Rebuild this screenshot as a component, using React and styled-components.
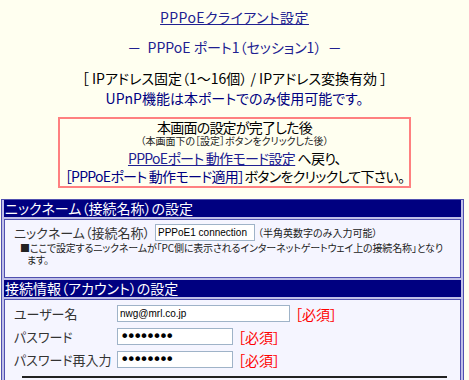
import styled, { createGlobalStyle } from "styled-components";

const GlobalStyle = createGlobalStyle`
  body {
    margin: 0;
    background: #fffff0;
    font-family: "Noto Sans CJK JP", "Noto Sans", sans-serif;
    font-feature-settings: "palt";
    color: #000;
  }
`;

const Page = styled.div`
  display: flex;
  flex-direction: column;
  align-items: center;
  padding-top: 8px;
`;

const Title = styled.a`
  font-size: 14px;
  line-height: 18px;
  color: #202090;
  text-decoration: underline;
  letter-spacing: 0.4px;
`;

const Line = styled.div`
  font-size: 14px;
  line-height: 18px;
  margin-top: ${(p) => p.$gap || 0}px;
  color: ${(p) => p.$color || "#000"};
  white-space: nowrap;
`;

const Notice = styled.div`
  margin-top: 10px;
  width: 353px;
  box-sizing: border-box;
  border: 2px solid #ff8080;
  padding: 0 0 1px;
  text-align: center;
`;

const NoticeHead = styled.div`
  font-size: 14px;
  line-height: 16px;
  letter-spacing: -0.8px;
`;

const Small = styled.div`
  font-size: 10px;
  line-height: 12px;
  color: #222;
`;

const NoticeLine = styled.div`
  font-size: 14px;
  line-height: 18px;
  margin-top: ${(p) => p.$gap || 0}px;
  letter-spacing: -0.7px;
  white-space: nowrap;
`;

const Link = styled.a`
  color: #202090;
  text-decoration: underline;
`;

const Navy = styled.span`
  color: #000080;
`;

const Panel = styled.div`
  align-self: flex-start;
  margin: 11px 0 0 1px;
  width: 463px;
  box-sizing: border-box;
  border: 1px solid #5050b0;
  background: #c0c0e8;
  padding: 0 2px 2px;
  display: flex;
  flex-direction: column;
  gap: 2px;
`;

const Heading = styled.div`
  background: #000080;
  color: #fff;
  font-size: 14px;
  line-height: 17px;
  padding-left: 1px;
`;

const Cell = styled.div`
  background: #f5f5ff;
  border: 1px solid #5050b0;
  padding: ${(p) => p.$pad};
  display: flex;
  flex-direction: column;
  gap: ${(p) => p.$gap || 0}px;
`;

const Row = styled.div`
  display: flex;
  align-items: center;
  height: 17px;
`;

const Label = styled.span`
  width: ${(p) => p.$w}px;
  flex: none;
  font-size: 13px;
  color: #333;
  white-space: nowrap;
`;

const Field = styled.input`
  box-sizing: border-box;
  width: ${(p) => p.$w}px;
  height: 17px;
  margin: 0;
  padding: 0 2px;
  border: 1px solid #9fb3c8;
  background: #fff;
  font-family: "Liberation Sans", sans-serif;
  font-size: 10px;
  color: #000;
  outline: none;

  &[type="password"] {
    font-family: "DejaVu Sans", sans-serif;
    font-size: 16px;
    letter-spacing: -3px;
    line-height: 15px;
  }
`;

const Hint = styled.span`
  margin-left: 3px;
  font-size: 10px;
  color: #222;
`;

const Required = styled.span`
  margin-left: 5px;
  font-size: 14px;
  color: #ff0000;
`;

const Note = styled.div`
  margin-top: 1px;
  padding-left: 13px;
  text-indent: -7px;
  font-size: 10px;
  line-height: 12px;
  letter-spacing: -0.15px;
  color: #222;
  white-space: nowrap;
`;

const NextBox = styled.div`
  margin: 2px 4px 0 8px;
  height: 30px;
  border-top: 2px solid #222;
`;

const App = () => {
  return (
    <>
      <GlobalStyle />
      <Page>
        <Title href="#">PPPoEクライアント設定</Title>
        <Line $gap={12} $color="#202090">
          －&nbsp;&nbsp;PPPoE ポート1（セッション1）&nbsp;&nbsp;－
        </Line>
        <Line $gap={13}>［ IPアドレス固定（1～16個） / IPアドレス変換有効 ］</Line>
        <Line $gap={2} $color="#000080">
          UPnP機能は本ポートでのみ使用可能です。
        </Line>
        <Notice>
          <NoticeHead>本画面の設定が完了した後</NoticeHead>
          <Small>（本画面下の［設定］ボタンをクリックした後）</Small>
          <NoticeLine $gap={2}>
            <Link href="#">PPPoEポート 動作モード設定</Link> へ戻り、
          </NoticeLine>
          <NoticeLine>
            <Navy>［PPPoEポート 動作モード適用］</Navy>ボタンをクリックして下さい。
          </NoticeLine>
        </Notice>
        <Panel>
          <Heading>ニックネーム（接続名称）の設定</Heading>
          <Cell $pad="4px 9px 11px">
            <Row>
              <Label $w={141}>ニックネーム（接続名称）</Label>
              <Field type="text" $w={100} defaultValue="PPPoE1 connection" />
              <Hint>（半角英数字のみ入力可能）</Hint>
            </Row>
            <Note>
              ■ここで設定するニックネームが「PC側に表示されるインターネットゲートウェイ上の接続名称」となり
              <br />
              ます。
            </Note>
          </Cell>
          <Heading>接続情報（アカウント）の設定</Heading>
          <Cell $pad="5px 9px 0" $gap={6}>
            <Row>
              <Label $w={103}>ユーザー名</Label>
              <Field type="text" $w={173} defaultValue="nwg@mrl.co.jp" />
              <Required>［必須］</Required>
            </Row>
            <Row>
              <Label $w={103}>パスワード</Label>
              <Field type="password" $w={116} defaultValue="password" />
              <Required>［必須］</Required>
            </Row>
            <Row>
              <Label $w={103}>パスワード再入力</Label>
              <Field type="password" $w={116} defaultValue="password" />
              <Required>［必須］</Required>
            </Row>
            <NextBox />
          </Cell>
        </Panel>
      </Page>
    </>
  );
};

export default App;
